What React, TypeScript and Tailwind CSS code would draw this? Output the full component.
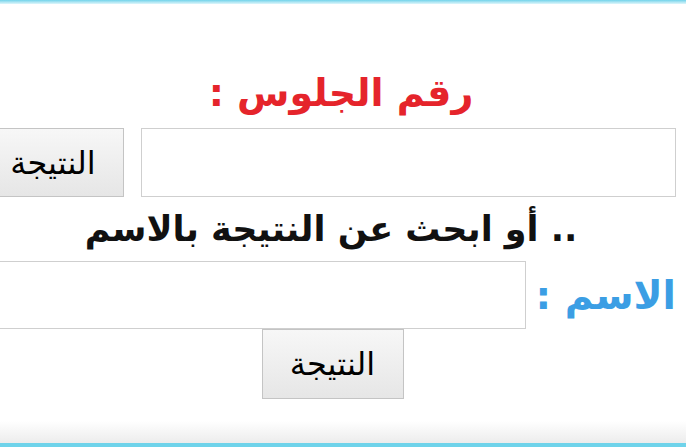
export default function App() {
  return (
    <div
      dir="rtl"
      className="relative flex h-[447px] w-[686px] flex-col overflow-hidden bg-white"
      style={{ fontFamily: '"DejaVu Sans", "Liberation Sans", sans-serif' }}
    >
      <div className="h-[4px] w-full bg-gradient-to-b from-[#6fd3ea] to-[#dff6fb]" />

      {/* title */}
      <div className="mt-[62px] flex h-[54px] items-center justify-center pr-[4px]">
        <span className="whitespace-nowrap text-[38px] font-bold leading-none text-[#e5242b]">رقم الجلوس :</span>
      </div>

      {/* seat number row */}
      <div className="mt-[8px] flex h-[69px] items-stretch gap-[17px] pr-[10px]">
        <div className="w-[535px] shrink-0 border border-[#cfcfcf] bg-white" />
        <button className="w-[142px] shrink-0 border border-[#c4c4c4] bg-gradient-to-b from-[#f7f7f7] to-[#e6e6e6] text-[32px] leading-none text-black">
          النتيجة
        </button>
      </div>

      {/* or search by name */}
      <div className="flex h-[64px] items-center justify-center pr-[24px]">
        <span className="whitespace-nowrap text-[35px] font-bold leading-none text-[#111]">.. أو ابحث عن النتيجة بالاسم</span>
      </div>

      {/* name row */}
      <div className="flex h-[68px] items-stretch gap-[14px] pr-[10px]">
        <div className="flex w-[136px] shrink-0 items-center justify-start">
          <span className="whitespace-nowrap text-[39px] font-bold leading-none text-[#3b9ee4]">الاسم :</span>
        </div>
        <div className="w-[560px] shrink-0 border border-[#cfcfcf] bg-white" />
      </div>

      {/* name submit */}
      <div className="flex justify-center pr-[21px]">
        <button className="h-[70px] w-[142px] border border-[#c4c4c4] bg-gradient-to-b from-[#f7f7f7] to-[#e6e6e6] text-[32px] leading-none text-black">
          النتيجة
        </button>
      </div>

      <div className="flex-1 bg-gradient-to-b from-white via-white to-[#ececec]" />
      <div className="h-[4px] w-full bg-[#6fd3ea]" />
    </div>
  );
}
